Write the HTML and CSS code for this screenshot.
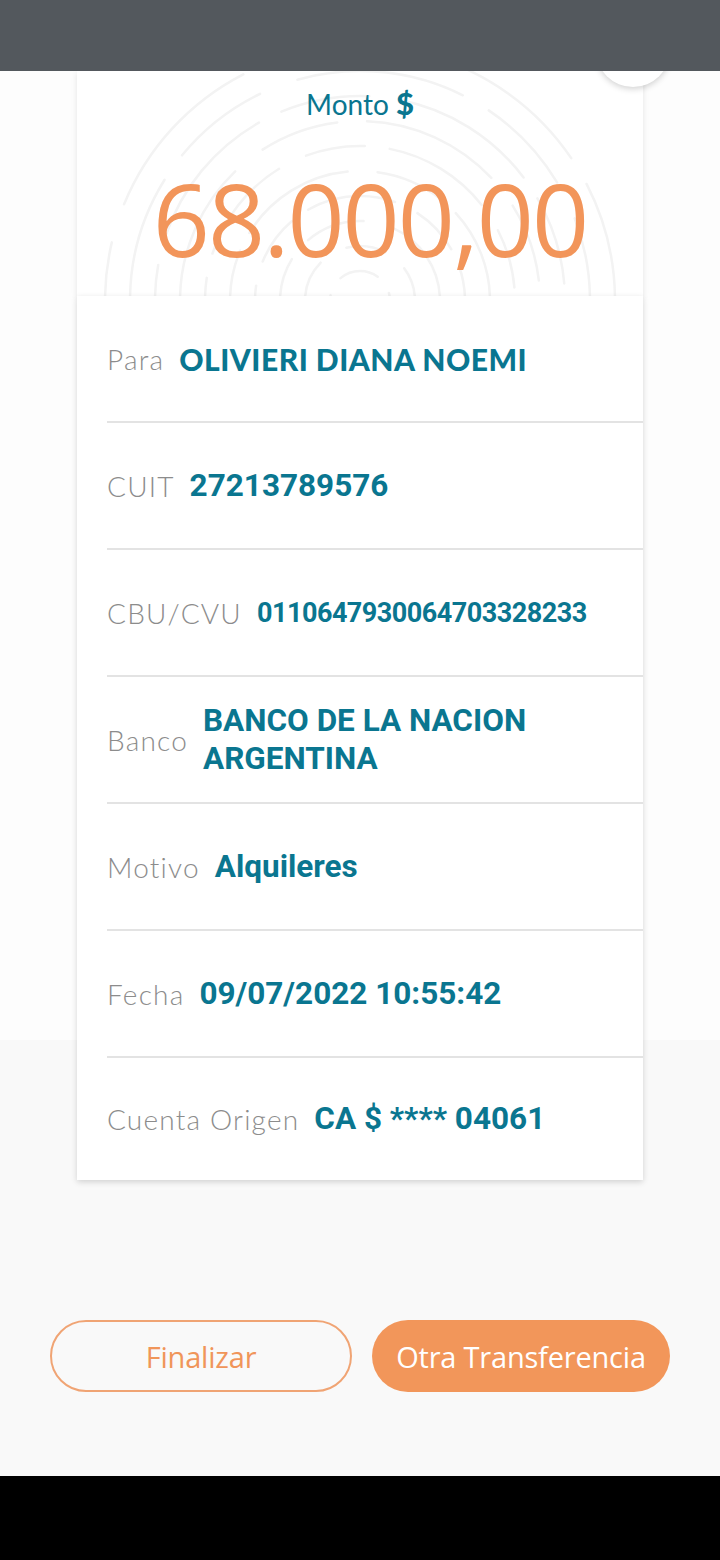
FILE: index.html
```html
<!DOCTYPE html>
<html lang="es">
<head>
    <meta charset="UTF-8">
    <meta name="viewport" content="width=device-width, initial-scale=1.0">
    <title>Comprobante de transferencia</title>
    <link rel="stylesheet" href="styles.css">
</head>
<body>
    <div class="status-bar"></div>

    <main class="screen">
        <div class="close-circle"></div>

        <section class="amount-card">
            <svg class="print" width="566" height="225" viewBox="0 0 566 225">
                <g fill="none" stroke="#f3f3f3" stroke-width="2.5" stroke-linecap="round">
                    <circle cx="283" cy="230" r="30" stroke-dasharray="40 20"/>
                    <circle cx="283" cy="230" r="55" stroke-dasharray="60 30 40 25"/>
                    <circle cx="283" cy="230" r="80" stroke-dasharray="90 25 60 30"/>
                    <circle cx="283" cy="230" r="105" stroke-dasharray="50 20 90 25"/>
                    <circle cx="283" cy="230" r="130" stroke-dasharray="120 30 70 20"/>
                    <circle cx="283" cy="230" r="155" stroke-dasharray="60 25 110 30"/>
                    <circle cx="283" cy="230" r="180" stroke-dasharray="140 35 80 30"/>
                    <circle cx="283" cy="230" r="205" stroke-dasharray="90 30 150 25"/>
                    <circle cx="283" cy="230" r="230" stroke-dasharray="170 30 100 40"/>
                    <circle cx="283" cy="230" r="255" stroke-dasharray="120 40 180 30"/>
                </g>
            </svg>
            <p class="monto">Monto <b>$</b></p>
            <p class="amount">68.000,00</p>
        </section>

        <section class="details">
            <div class="row">
                <span class="label">Para</span>
                <span class="value name">OLIVIERI DIANA NOEMI</span>
            </div>
            <div class="row">
                <span class="label">CUIT</span>
                <span class="value">27213789576</span>
            </div>
            <div class="row">
                <span class="label">CBU/CVU</span>
                <span class="value small">0110647930064703328233</span>
            </div>
            <div class="row">
                <span class="label">Banco</span>
                <span class="value">BANCO DE LA NACION ARGENTINA</span>
            </div>
            <div class="row">
                <span class="label">Motivo</span>
                <span class="value">Alquileres</span>
            </div>
            <div class="row">
                <span class="label">Fecha</span>
                <span class="value">09/07/2022 10:55:42</span>
            </div>
            <div class="row last">
                <span class="label">Cuenta Origen</span>
                <span class="value">CA $ **** 04061</span>
            </div>
        </section>

        <div class="actions">
            <button class="btn btn-outline">Finalizar</button>
            <button class="btn btn-fill">Otra Transferencia</button>
        </div>
    </main>

    <footer class="nav-bar"></footer>
</body>
</html>
```

FILE: styles.css
```css
body {
    margin: 0;
    width: 720px;
    height: 1560px;
    display: flex;
    flex-direction: column;
    font-family: Lato, "Open Sans", sans-serif;
    overflow: hidden;
}
p {
    margin: 0;
}
.status-bar {
    height: 71px;
    background: #53585d;
    position: relative;
    z-index: 3;
}
.screen {
    flex: 1;
    position: relative;
    background: linear-gradient(#fdfdfd 0, #fdfdfd 969px, #f9f9f9 969px);
}
.close-circle {
    position: absolute;
    top: -58px;
    left: 596px;
    width: 74px;
    height: 74px;
    border-radius: 50%;
    background: #fff;
    box-shadow: 0 2px 6px rgba(0, 0, 0, 0.18);
    z-index: 1;
}
.amount-card {
    margin: 0 77px;
    height: 225px;
    box-sizing: border-box;
    padding-top: 15px;
    background: #fff;
    text-align: center;
    position: relative;
    overflow: hidden;
    box-shadow: 0 2px 6px rgba(0, 0, 0, 0.1);
}
.print {
    position: absolute;
    left: 0;
    top: 0;
}
.monto {
    position: relative;
    font-size: 28px;
    line-height: 34px;
    color: #0a7690;
}
.monto b {
    font-weight: 900;
    font-size: 31px;
}
.amount {
    position: relative;
    margin-top: 42px;
    padding-left: 20px;
    font-family: "Open Sans", sans-serif;
    font-weight: 400;
    font-size: 100px;
    line-height: 110px;
    letter-spacing: -2px;
    color: #f2955a;
}
.details {
    margin: 0 77px;
    background: #fff;
    position: relative;
    z-index: 2;
    box-shadow: 0 2px 6px rgba(0, 0, 0, 0.16);
}
.row {
    display: flex;
    align-items: center;
    gap: 15px;
    height: 125px;
    margin-left: 30px;
    border-bottom: 2px solid #e3e3e3;
}
.row.last {
    height: 122px;
    border-bottom: none;
}
.label {
    font-family: Lato, sans-serif;
    font-weight: 300;
    font-size: 28px;
    letter-spacing: 1.2px;
    color: #8c8c8c;
    white-space: nowrap;
}
.value {
    font-family: Roboto, sans-serif;
    font-weight: 700;
    font-size: 31.5px;
    line-height: 38px;
    color: #0a7690;
    max-width: 340px;
}
.value.name {
    font-family: Lato, sans-serif;
    font-weight: 900;
    font-size: 30px;
    letter-spacing: 0.5px;
    max-width: none;
}
.value.small {
    font-size: 27px;
    letter-spacing: -0.5px;
    max-width: none;
}
.actions {
    display: flex;
    gap: 20px;
    padding: 0 50px;
    margin-top: 140px;
}
.btn {
    flex: 1;
    height: 72px;
    border-radius: 36px;
    font-family: "Open Sans", sans-serif;
    font-size: 29px;
    letter-spacing: -0.2px;
    cursor: pointer;
}
.btn-outline {
    background: transparent;
    border: 2px solid #f0a474;
    color: #f0955a;
}
.btn-fill {
    background: #f2965a;
    border: none;
    color: #fff;
}
.nav-bar {
    height: 84px;
    background: #000;
}
```
